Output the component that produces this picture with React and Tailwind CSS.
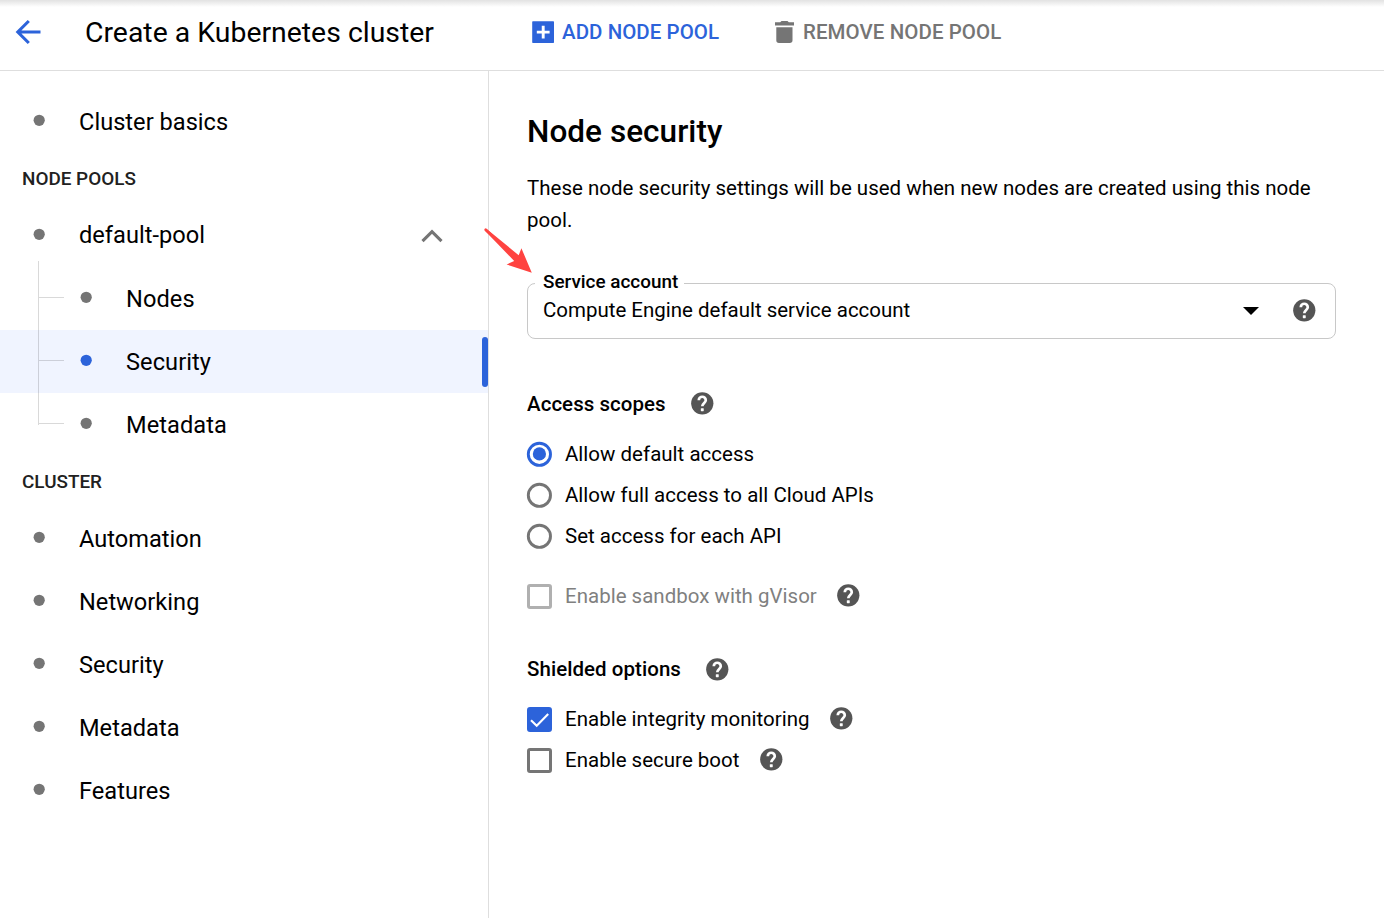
function Help({ className = '' }) {
  return (
    <svg viewBox="0 0 24 24" className={`size-[27px] shrink-0 ${className}`}>
      <circle cx="11.8" cy="11.8" r="9.9" fill="#555" />
      <path d="M8.700 9.100a3.100 3.100 0 0 1 6.200 0c0 2.300-3.100 2.500-3.100 5.400" fill="none" stroke="#fff" strokeWidth="2.400" />
      <rect x="10.500" y="16.200" width="2.600" height="2.600" rx="0.500" fill="#fff" />
    </svg>
  )
}

function Dot({ active = false }) {
  return (
    <svg viewBox="0 0 12 12" className={`mb-[3px] size-3 shrink-0 ${active ? 'fill-[#2c63da]' : 'fill-[#757575]'}`}>
      <circle cx="6.2" cy="6.3" r="5.6" />
    </svg>
  )
}

function NavItem({ label, children }) {
  return (
    <div className="flex h-[63px] items-center pl-[33px] pr-[44.5px]">
      <Dot />
      <span className={`ml-[34px] flex-1 text-[23.6px] tracking-[0.02px] ${children ? '' : 'pt-0.5'}`}>{label}</span>
      {children}
    </div>
  )
}

function SubItem({ label, active = false, last = false }) {
  return (
    <div className={`flex h-[63px] pl-[38px] ${active ? 'bg-[#f0f4ff]' : ''}`}>
      <div className={`relative w-[42px] shrink-0 ${last ? 'h-8' : 'h-[63px]'}`}>
        <div className={`absolute bottom-0 left-0 w-px bg-black/15 ${active || last ? 'top-0' : '-top-1.5'}`} />
        <div className="absolute left-px top-[30px] h-px w-[25px] bg-black/15" />
      </div>
      <div className="flex flex-1 items-center">
        <Dot active={active} />
        <span className="ml-[34px] flex-1 pt-0.5 text-[23.6px] tracking-[0.07px]">{label}</span>
        {active && <div className="h-[50px] w-1.5 rounded-[3px] bg-[#2c63da]" />}
      </div>
    </div>
  )
}

function NavHeading({ children }) {
  return (
    <div className="flex h-[51px] items-center pl-[22px] pt-0.5 text-[18.9px] font-medium text-[#212121]">{children}</div>
  )
}

function Radio({ label, checked = false }) {
  return (
    <div className="flex h-[41px] items-center">
      <svg viewBox="0 0 26 26" className="-ml-px size-[26px] shrink-0">
        <circle cx="13.4" cy="13.3" r="11.1" fill="none" stroke={checked ? '#2c63da' : '#757575'} strokeWidth="2.9" />
        {checked && <circle cx="13.4" cy="12.9" r="6.6" fill="#2c63da" />}
      </svg>
      <span className="ml-[13px] pt-0.5 text-[20.475px] tracking-[0.02px]">{label}</span>
    </div>
  )
}

function Check({ label, checked = false, disabled = false }) {
  const border = checked ? 'border-[#2c63da] bg-[#2c63da]' : disabled ? 'border-[#b0b0b0]' : 'border-[#757575]'
  return (
    <div className="flex h-[41px] items-center">
      <div className={`mt-px flex size-[25px] shrink-0 items-center justify-center rounded-[3px] border-[3px] ${border}`}>
        {checked && (
          <svg viewBox="0 0 19 19" className="size-[19px] shrink-0">
            <path d="M1 10.2 6.7 15.8 18.2 4" fill="none" stroke="#fff" strokeWidth="2.1" />
          </svg>
        )}
      </div>
      <span className={`ml-[13px] pt-0.5 text-[20.475px] tracking-[0.02px] ${disabled ? 'text-[#808080]' : ''}`}>{label}</span>
      <Help className="ml-[18.5px]" />
    </div>
  )
}

export default function App() {
  return (
    <div className="relative flex h-[918px] w-[1384px] flex-col overflow-hidden bg-white font-['Roboto',sans-serif] text-black">
      <div className="absolute inset-x-0 top-0 h-[7px] bg-gradient-to-b from-[#e2e2e2] to-white" />
      <header className="relative flex h-[71px] shrink-0 items-center border-b border-[#dedede] pb-[6px]">
        <svg viewBox="0 0 26 26" className="ml-[15px] size-[26px]">
          <path d="M25.500 13H3M13.800 2 2.800 13l11 11" fill="none" stroke="#2c63da" strokeWidth="3.100" />
        </svg>
        <h1 className="ml-[44px] w-[447px] pt-0.5 text-[28.35px] tracking-[0.03px]">Create a Kubernetes cluster</h1>
        <div className="flex w-[242.5px] items-center text-[20.475px] font-medium text-[#2c63da]">
          <svg viewBox="0 0 22 22" className="size-[22px]">
            <rect x="0.200" y="0.200" width="21.800" height="21.800" rx="0.700" fill="#2c63da" />
            <path d="M11.200 4.700v12.800M4.800 11.100h12.800" stroke="#fff" strokeWidth="2.900" />
          </svg>
          <span className="ml-2 tracking-[0.06px]">ADD NODE POOL</span>
        </div>
        <div className="flex items-center text-[20.475px] font-medium text-[#757575]">
          <svg viewBox="0 0 19 22" className="h-[22px] w-[19px]" fill="#757575">
            <path d="M0 1.300h5.200L6.500 0h6l1.300 1.300H19V4.500H0zM1.300 6.200h16.200V19.300a2.700 2.700 0 0 1-2.700 2.700H4a2.700 2.700 0 0 1-2.700-2.700z" />
          </svg>
          <span className="ml-[9.5px] tracking-[0.08px]">REMOVE NODE POOL</span>
        </div>
      </header>

      <div className="flex flex-1">
        <nav className="w-[489px] shrink-0 border-r border-[#dedede] pt-[19px]">
          <NavItem label="Cluster basics" />
          <NavHeading>NODE POOLS</NavHeading>
          <NavItem label="default-pool">
            <svg viewBox="0 0 24 16" className="h-4 w-6">
              <path d="M2.500 13.200 12 3.700l9.500 9.500" fill="none" stroke="#757575" strokeWidth="3.100" />
            </svg>
          </NavItem>
          <SubItem label="Nodes" />
          <SubItem label="Security" active />
          <SubItem label="Metadata" last />
          <NavHeading>CLUSTER</NavHeading>
          <NavItem label="Automation" />
          <NavItem label="Networking" />
          <NavItem label="Security" />
          <NavItem label="Metadata" />
          <NavItem label="Features" />
        </nav>

        <main className="flex-1 pl-[38px] pr-12 pt-[41px]">
          <h2 className="text-[31.5px] font-medium leading-10 tracking-[0.05px]">Node security</h2>
          <p className="mt-[20px] text-[20.475px] leading-8 tracking-[0.02px]">
            These node security settings will be used when new nodes are created using this node pool.
          </p>

          <div className="relative mt-[47px] flex h-14 items-center rounded-[8px] border border-[#c8c8c8] pb-0.5 pl-[15px] pr-[17px]">
            <div className="absolute -top-[13px] left-[7px] bg-white pl-2 pr-[6px] text-[18.9px] font-medium leading-[22px]">
              Service account
            </div>
            <span className="flex-1 text-[20.475px]">Compute Engine default service account</span>
            <svg viewBox="0 0 16 8" className="mr-[32px] mt-0.5 h-2 w-4">
              <path d="M0 0h16L8 8z" />
            </svg>
            <Help />
          </div>

          <div className="mt-[45px] flex h-10 items-center text-[20.475px] font-medium">
            <span className="tracking-[0.06px]">Access scopes</span>
            <Help className="-mt-px ml-[23px]" />
          </div>
          <div className="mt-[9px]">
            <Radio label="Allow default access" checked />
            <Radio label="Allow full access to all Cloud APIs" />
            <Radio label="Set access for each API" />
          </div>
          <div className="mt-[19px]">
            <Check label="Enable sandbox with gVisor" disabled />
          </div>
          <div className="mt-[33px] flex h-10 items-center text-[20.475px] font-medium">
            <span className="tracking-[0.06px]">Shielded options</span>
            <Help className="ml-[23px]" />
          </div>
          <div className="mt-[9px]">
            <Check label="Enable integrity monitoring" checked />
            <Check label="Enable secure boot" />
          </div>
        </main>
      </div>

      <svg viewBox="0 0 52 48" className="absolute left-[482px] top-[226px] h-12 w-[52px]">
        <path
          d="M3.700 3.700 34.500 32.500"
          fill="none"
          stroke="#ff4340"
          strokeWidth="2.600"
          strokeLinecap="round"
        />
        <path d="M4.400 2.700 36.700 29.200 39.400 22.200 49.800 46.800 24.600 38.500 32.200 35 2.700 4.500z" fill="#ff4340" />
      </svg>
    </div>
  )
}
